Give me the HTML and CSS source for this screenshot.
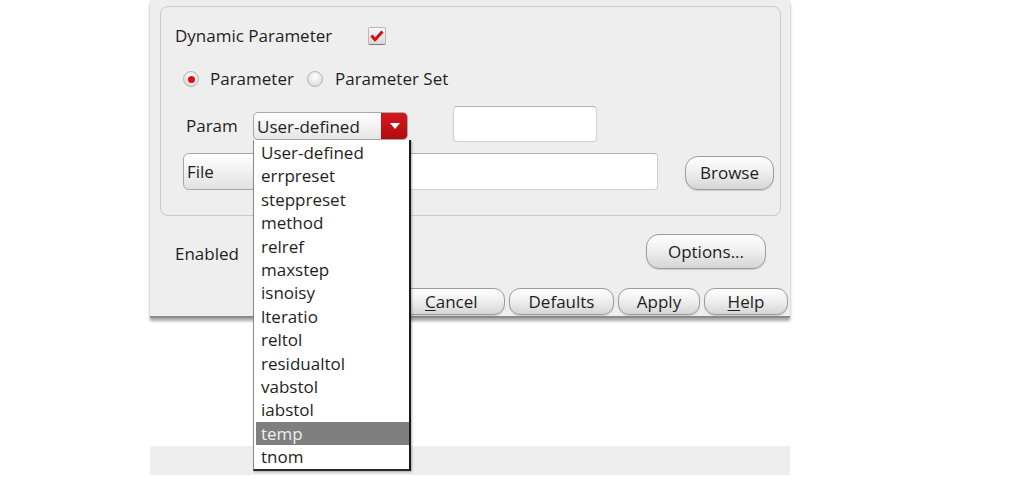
FILE: index.html
```html
<!DOCTYPE html>
<html>
<head>
<meta charset="utf-8">
<link rel="stylesheet" href="styles.css">
</head>
<body>
<div class="dialog">
  <div class="group">
    <div class="row row1">
      <span class="label dyn">Dynamic Parameter</span>
      <span class="check">
        <svg width="14" height="12" viewBox="0 0 14 12"><path d="M1.5 5.5 L5 9.8 L12.5 1.5" fill="none" stroke="#d40f14" stroke-width="3" stroke-linejoin="round"/></svg>
      </span>
    </div>
    <div class="row row2">
      <span class="radio on"><span class="dot"></span></span>
      <span class="label rlabel first">Parameter</span>
      <span class="radio second"></span>
      <span class="label rlabel">Parameter Set</span>
    </div>
    <div class="row row3">
      <span class="label param">Param</span>
      <span class="combo">
        <span class="combo-text">User-defined</span>
        <span class="combo-btn"><svg width="10" height="6" viewBox="0 0 10 6"><path d="M0 0 L10 0 L5 6 Z" fill="#fff"/></svg></span>
      </span>
      <span class="field small"></span>
    </div>
    <div class="row row4">
      <span class="filecombo"><span class="combo-text">File</span></span>
      <span class="field long"></span>
      <span class="btn browse">Browse</span>
    </div>
  </div>
  <div class="row row5">
    <span class="label enabled">Enabled</span>
    <span class="btn options">Options...</span>
  </div>
  <div class="row row6">
    <span class="btn b-cancel"><u>C</u>ancel</span>
    <span class="btn b-defaults">Defaults</span>
    <span class="btn b-apply">Apply</span>
    <span class="btn b-help"><u>H</u>elp</span>
  </div>
</div>
<div class="strip"></div>

<ul class="list">
  <li>User-defined</li>
  <li>errpreset</li>
  <li>steppreset</li>
  <li>method</li>
  <li>relref</li>
  <li>maxstep</li>
  <li>isnoisy</li>
  <li>lteratio</li>
  <li>reltol</li>
  <li>residualtol</li>
  <li>vabstol</li>
  <li>iabstol</li>
  <li class="sel">temp</li>
  <li>tnom</li>
</ul>
</body>
</html>
```

FILE: styles.css
```css
* { box-sizing: border-box; }
html, body { margin: 0; padding: 0; background: #fff; }
body {
  font-family: "Open Sans", "Noto Sans", sans-serif;
  font-size: 17px;
  color: #1e1e1e;
  width: 1012px;
  height: 480px;
  overflow: hidden;
  position: relative;
}
.dialog {
  margin-left: 150px;
  width: 640px;
  height: 318px;
  background: #eeeeee;
  border-bottom: 2px solid #8a8a8a;
  box-shadow: 0 3px 3px rgba(0,0,0,0.35);
  padding-top: 6px;
}
.group {
  margin-left: 10px;
  width: 621px;
  height: 210px;
  border: 1px solid #c9c9c9;
  border-radius: 8px;
}
.row { display: flex; align-items: center; }
.label { white-space: nowrap; line-height: 20px; }
.row1 { height: 58px; }
.dyn { margin-left: 14px; width: 193px; }
.check {
  width: 18px; height: 18px;
  border: 1px solid #b9b9b9;
  border-bottom-color: #777;
  border-radius: 2px;
  background: linear-gradient(#f8f8f8, #d9d9d9);
  display: flex; align-items: center; justify-content: center;
}
.row2 { height: 28px; }
.radio {
  width: 16px; height: 16px;
  border-radius: 50%;
  border: 1px solid #b4b4b4;
  background: radial-gradient(circle at 50% 35%, #ffffff, #d3d3d3);
  display: flex; align-items: center; justify-content: center;
  margin-left: 22px;
}
.radio .dot {
  width: 7px; height: 7px; border-radius: 50%;
  background: #d8101a;
}
.radio.second { margin-left: 0; }
.rlabel { margin-left: 12px; }
.rlabel.first { margin-left: 11px; width: 97px; }
.row3 { height: 36px; margin-top: 15px; }
.param { margin-left: 25px; width: 67px; }
.combo {
  width: 155px; height: 28px;
  border: 1px solid #a8a8a8;
  border-radius: 5px;
  background: linear-gradient(#ffffff, #e6e6e6);
  display: flex; align-items: center;
  overflow: hidden;
}
.combo-text { padding-left: 3px; flex: 1; white-space: nowrap; }
.combo-btn {
  width: 27px; height: 28px;
  margin-right: -1px;
  background: linear-gradient(#d41820, #b30a10);
  border-radius: 0 5px 5px 0;
  display: flex; align-items: center; justify-content: center;
}
.field {
  height: 36px;
  background: #fff;
  border: 1px solid #d0d0d0;
  border-top-color: #b0b0b0;
  border-radius: 4px;
}
.field.small { margin-left: 45px; width: 144px; margin-bottom: 4px; }
.row4 { height: 37px; margin-top: 9px; }
.filecombo {
  margin-left: 22px;
  width: 108px; height: 37px;
  border: 1px solid #a8a8a8;
  border-radius: 6px;
  background: linear-gradient(#ffffff, #e2e2e2);
  display: flex; align-items: center;
}
.field.long { margin-left: 4px; width: 363px; height: 37px; }
.btn {
  display: flex; align-items: center; justify-content: center;
  border: 1px solid #9c9c9c;
  background: linear-gradient(#fdfdfd 0%, #f0f0f0 45%, #d5d5d5 100%);
  white-space: nowrap;
  box-shadow: 0 1px 1px rgba(0,0,0,0.15);
}
.browse { margin-left: 27px; margin-top: 2px; width: 89px; height: 34px; border-radius: 13px; }
.row5 { height: 35px; margin-top: 18px; }
.enabled { margin-left: 25px; margin-top: 4px; }
.options { margin-left: auto; margin-right: 24px; width: 120px; height: 35px; border-radius: 13px; }
.row6 { height: 26px; margin-top: 19px; gap: 4px; padding-left: 245px; }
.row6 .btn { height: 27px; border-radius: 11px; }
.b-cancel { width: 110px; justify-content: flex-start; padding-left: 29px; }
.b-defaults { width: 105px; }
.b-apply { width: 82px; }
.b-help { width: 84px; }
u { text-decoration-thickness: 1px; text-underline-offset: 2px; }
.strip {
  margin-left: 150px;
  margin-top: 128px;
  width: 640px;
  height: 29px;
  background: #eeeeee;
}
.list {
  position: absolute;
  left: 253px; top: 140px;
  width: 158px; height: 331px;
  margin: 0; padding: 1px 0 0 0;
  list-style: none;
  background: #fff;
  border-left: 1px solid #8a8a8a;
  border-right: 2px solid #1a1a1a;
  border-bottom: 2px solid #2a2a2a;
  box-shadow: 1px 1px 2px rgba(0,0,0,0.3);
}
.list li {
  height: 23.4px;
  line-height: 23.4px;
  padding-left: 7px;
  white-space: nowrap;
}
.list li.sel {
  background: #7f7f7f;
  color: #eee;
  margin-left: 2px;
  padding-left: 5px;
}
```
